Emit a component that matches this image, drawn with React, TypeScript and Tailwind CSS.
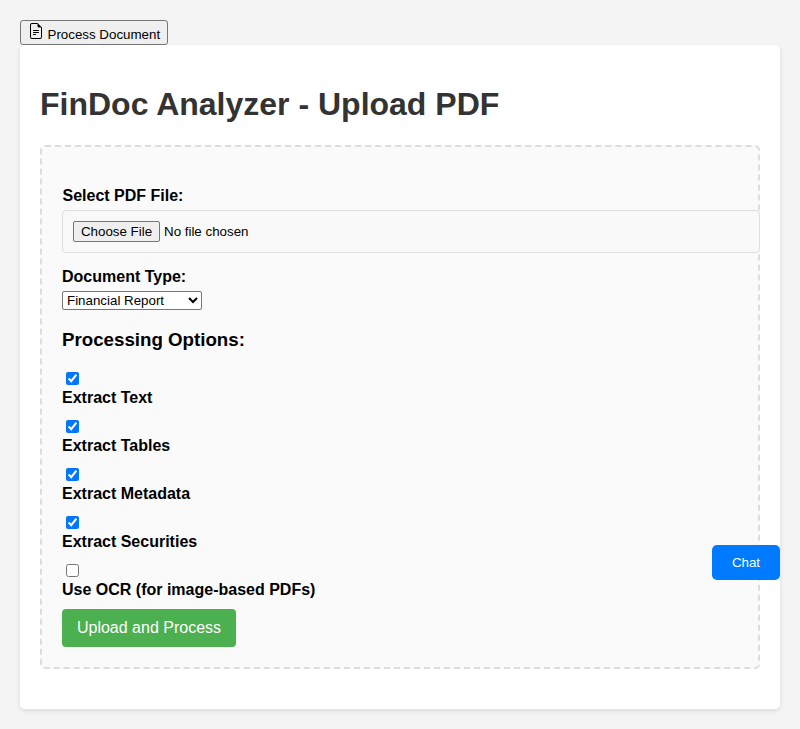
import React from 'react';

const options = [
  { label: 'Extract Text', checked: true },
  { label: 'Extract Tables', checked: true },
  { label: 'Extract Metadata', checked: true },
  { label: 'Extract Securities', checked: true },
  { label: 'Use OCR (for image-based PDFs)', checked: false },
];

export default function App() {
  return (
    <div className="min-h-screen bg-[#f4f4f4] p-5 font-['Liberation_Sans',Arial,sans-serif] text-base leading-[18px] text-black">
      <button className="flex h-[25px] w-[148px] items-center rounded-[3px] border border-[#767676] bg-[#efefef] pl-[7px] text-[13.333px] leading-[15px]">
        <svg width="16" height="16" viewBox="0 0 16 16" fill="currentColor" className="mr-[3.5px] mb-[3px]">
          <path d="M5.5 7a.5.5 0 0 0 0 1h5a.5.5 0 0 0 0-1zM5 9.5a.5.5 0 0 1 .5-.5h5a.5.5 0 0 1 0 1h-5a.5.5 0 0 1-.5-.5m0 2a.5.5 0 0 1 .5-.5h2a.5.5 0 0 1 0 1h-2a.5.5 0 0 1-.5-.5" />
          <path d="M9.5 0H4a2 2 0 0 0-2 2v12a2 2 0 0 0 2 2h8a2 2 0 0 0 2-2V4.5zm0 1v2A1.500 1.500 0 0 0 11 4.500h2V14a1 1 0 0 1-1 1H4a1 1 0 0 1-1-1V2a1 1 0 0 1 1-1z" />
        </svg>
        <span className="pt-[3px]">Process Document</span>
      </button>
      <main className="h-[664px] rounded-[5px] bg-white px-5 pt-[41px] shadow-[0_2px_5px_rgba(0,0,0,0.1)]">
        <h1 className="h-[37px] text-[32px] leading-[37px] font-bold text-[#333]">FinDoc Analyzer - Upload PDF</h1>
        <form className="mt-[22px] h-[524px] rounded-[5px] border-2 border-dashed border-[#ddd] bg-[#fafafa] px-5 pt-10" onSubmit={(e) => e.preventDefault()}>
          <label className="block pl-[0.5px] font-bold">Select PDF File:</label>
          <div className="mt-[5px] flex h-[43px] w-[698px] items-center rounded-[4px] border border-[#ddd] bg-[#f9f9f9] pl-[10px] text-[13.333px]">
            <button type="button" className="h-[21px] w-[87px] rounded-[2px] border border-[#767676] bg-[#efefef] leading-[15px]">Choose File</button>
            <span className="ml-1">No file chosen</span>
          </div>
          <label className="mt-[15px] block font-bold">Document Type:</label>
          <select className="mt-[5px] block h-[19px] w-[140px] rounded-[2px] border border-[#767676] bg-white text-[13.333px] leading-[15px]">
            <option>Financial Report</option>
          </select>
          <h3 className="mt-[19px] text-[18.72px] leading-[21px] font-bold">Processing Options:</h3>
          <div className="mt-[22px]">
            {options.map((o) => (
              <div key={o.label} className="h-12">
                <input type="checkbox" defaultChecked={o.checked} className="ml-1 block size-[13px]" />
                <label className="mt-1 block font-bold">{o.label}</label>
              </div>
            ))}
          </div>
          <button className="mt-[-3px] block h-[38px] w-[174px] rounded-[4px] bg-[#4caf50] text-base leading-[18px] text-white">Upload and Process</button>
        </form>
      </main>
      <button className="fixed top-[545px] right-5 h-[35px] w-[68px] rounded-[5px] bg-[#007bff] text-[13.333px] leading-[15px] text-white">Chat</button>
    </div>
  );
}
